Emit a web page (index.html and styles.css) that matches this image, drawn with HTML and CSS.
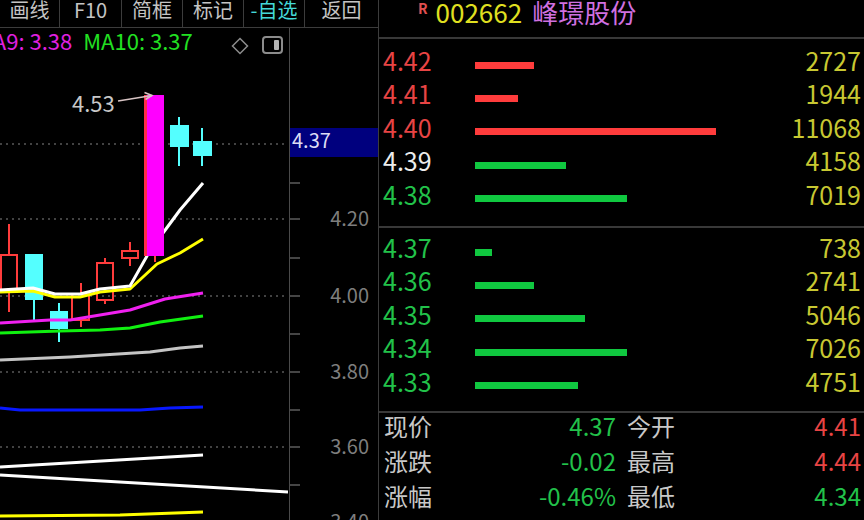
FILE: index.html
```html
<!DOCTYPE html>
<html lang="zh-CN">
<head>
<meta charset="utf-8">
<title>002662 峰璟股份</title>
<link rel="stylesheet" href="styles.css">
</head>
<body>
<div class="app">
  <section class="left">
    <nav class="toolbar">
      <span class="tb w60">画线</span>
      <span class="tb w62">F10</span>
      <span class="tb w61">简框</span>
      <span class="tb w61">标记</span>
      <span class="tb w61 cyan">-自选</span>
      <span class="tb w73">返回</span>
    </nav>
    <div class="chartrow">
      <div class="plot">
        <div class="legend">
          <span class="ma9">MA9: 3.38</span>
          <span class="ma10">MA10: 3.37</span>
          <svg class="icon-diamond" width="18" height="18" viewBox="0 0 18 18"><path d="M9 1.5 L16.5 9 L9 16.5 L1.5 9 Z" fill="none" stroke="#8c8c8c" stroke-width="1.5"/></svg>
          <svg class="icon-panel" width="21" height="18" viewBox="0 0 21 18"><rect x="1" y="1" width="19" height="16" rx="3" fill="none" stroke="#8c8c8c" stroke-width="2"/><rect x="12" y="4" width="5" height="10" rx="1" fill="#b4b4b4"/></svg>
        </div>
        <svg class="kline" width="289" height="462" viewBox="0 58 289 462">
          <g stroke="#585858" stroke-width="1.5" stroke-dasharray="2 4">
            <line x1="0" y1="144" x2="288" y2="144"/>
            <line x1="0" y1="219" x2="288" y2="219"/>
            <line x1="0" y1="296" x2="288" y2="296"/>
            <line x1="0" y1="372" x2="288" y2="372"/>
            <line x1="0" y1="447" x2="288" y2="447"/>
          </g>
          <!-- candles -->
          <g stroke="#ff3c3c" stroke-width="2" fill="none">
            <rect x="1" y="255" width="16" height="35"/>
            <line x1="9" y1="224" x2="9" y2="255"/><line x1="9" y1="290" x2="9" y2="312"/>
            <rect x="72" y="294" width="17" height="26"/>
            <line x1="81" y1="283" x2="81" y2="294"/><line x1="81" y1="320" x2="81" y2="327"/>
            <rect x="97" y="263" width="16" height="37"/>
            <line x1="105" y1="258" x2="105" y2="263"/><line x1="105" y1="300" x2="105" y2="304"/>
            <rect x="122" y="251" width="16" height="7"/>
            <line x1="130" y1="242" x2="130" y2="251"/><line x1="130" y1="258" x2="130" y2="266"/>
          </g>
          <g fill="#54ffff" stroke="#54ffff" stroke-width="2">
            <rect x="25" y="254" width="18" height="46" stroke="none"/>
            <line x1="34" y1="300" x2="34" y2="320"/>
            <rect x="50" y="311" width="18" height="18" stroke="none"/>
            <line x1="59" y1="303" x2="59" y2="342"/>
            <rect x="170" y="125" width="19" height="22" stroke="none"/>
            <line x1="179" y1="117" x2="179" y2="166"/>
            <rect x="193" y="141" width="19" height="15" stroke="none"/>
            <line x1="202" y1="128" x2="202" y2="166"/>
          </g>
          <!-- moving averages -->
          <g fill="none" stroke-width="3" stroke-linejoin="round">
            <polyline stroke="#ffff00" points="0,292 33,291 55,297 80,297 100,292 130,289 157,264 180,253 203,239"/>
            <polyline stroke="#ffffff" points="0,290 33,288 55,294 80,294 100,289 130,286 147,256 163,233 180,210 203,183"/>
            <polyline stroke="#f020f0" points="0,323 50,320 70,320 100,315 130,310 165,299 203,293"/>
            <polyline stroke="#10f010" points="0,333 60,331 100,330 130,328 160,322 203,316"/>
            <polyline stroke="#c4c4c4" points="0,360 70,357 150,352 180,348 203,346"/>
            <polyline stroke="#0818ff" points="0,408 20,410 140,410 170,408 203,407"/>
            <polyline stroke="#ffffff" points="0,467 203,455"/>
            <polyline stroke="#ffffff" points="0,475 288,492"/>
            <polyline stroke="#ffff00" points="0,516 120,515 203,512"/>
          </g>
          <!-- big candle -->
          <line x1="155" y1="256" x2="155" y2="262" stroke="#ff3c3c" stroke-width="2"/>
          <rect x="144" y="95" width="20" height="161" fill="#ff00ff"/>
          <rect x="144" y="95" width="3" height="161" fill="#ff2c48"/>
          <!-- annotation -->
          <text class="note" x="72" y="112">4.53</text>
          <g fill="none" stroke="#d8c4c4" stroke-width="1.5">
            <line x1="118" y1="101" x2="152" y2="95.5"/>
            <polyline points="144.5,92.5 152,95.5 145.5,99.5"/>
          </g>
        </svg>
      </div>
      <div class="axis">
        <svg width="88" height="492" viewBox="290 28 88 492">
          <g stroke="#5c5c5c" stroke-width="1.5">
            <line x1="290" y1="183" x2="300" y2="183"/>
            <line x1="290" y1="219" x2="300" y2="219"/>
            <line x1="290" y1="258" x2="300" y2="258"/>
            <line x1="290" y1="296" x2="300" y2="296"/>
            <line x1="290" y1="334" x2="300" y2="334"/>
            <line x1="290" y1="372" x2="300" y2="372"/>
            <line x1="290" y1="410" x2="300" y2="410"/>
            <line x1="290" y1="447" x2="300" y2="447"/>
            <line x1="290" y1="485" x2="300" y2="485"/>
          </g>
          <g class="axlbl">
            <text x="369" y="226">4.20</text>
            <text x="369" y="303">4.00</text>
            <text x="369" y="379">3.80</text>
            <text x="369" y="454">3.60</text>
            <text x="369" y="529">3.40</text>
          </g>
          <rect x="290" y="128" width="88" height="29" fill="#00007e"/>
          <text class="curpx" x="292" y="148">4.37</text>
        </svg>
      </div>
    </div>
  </section>

  <section class="right">
    <header class="quote-head">
      <span class="r">R</span>
      <span class="code">002662</span>
      <span class="name">峰璟股份</span>
    </header>
    <div class="book sell">
      <div class="row"><span class="px red">4.42</span><span class="bar rbar" style="width:59px"></span><span class="vol">2727</span></div>
      <div class="row"><span class="px red">4.41</span><span class="bar rbar" style="width:43px"></span><span class="vol">1944</span></div>
      <div class="row"><span class="px red">4.40</span><span class="bar rbar" style="width:241px"></span><span class="vol">11068</span></div>
      <div class="row"><span class="px white">4.39</span><span class="bar gbar" style="width:91px"></span><span class="vol">4158</span></div>
      <div class="row"><span class="px green">4.38</span><span class="bar gbar" style="width:152px"></span><span class="vol">7019</span></div>
    </div>
    <div class="book buy">
      <div class="row"><span class="px green">4.37</span><span class="bar gbar" style="width:17px"></span><span class="vol">738</span></div>
      <div class="row"><span class="px green">4.36</span><span class="bar gbar" style="width:59px"></span><span class="vol">2741</span></div>
      <div class="row"><span class="px green">4.35</span><span class="bar gbar" style="width:110px"></span><span class="vol">5046</span></div>
      <div class="row"><span class="px green">4.34</span><span class="bar gbar" style="width:152px"></span><span class="vol">7026</span></div>
      <div class="row"><span class="px green">4.33</span><span class="bar gbar" style="width:103px"></span><span class="vol">4751</span></div>
    </div>
    <div class="stats">
      <span class="lbl">现价</span><span class="val green">4.37</span><span class="lbl lbl2">今开</span><span class="val red">4.41</span>
      <span class="lbl">涨跌</span><span class="val green">-0.02</span><span class="lbl lbl2">最高</span><span class="val red">4.44</span>
      <span class="lbl">涨幅</span><span class="val green">-0.46%</span><span class="lbl lbl2">最低</span><span class="val green">4.34</span>
      <span class="lbl">总量</span><span class="val yellow">787463</span><span class="lbl lbl2">量比</span><span class="val green">0.97</span>
    </div>
  </section>
</div>
</body>
</html>
```

FILE: styles.css
```css
* { box-sizing: border-box; }
html, body { margin: 0; padding: 0; background: #000; }
body {
  width: 864px;
  height: 520px;
  overflow: hidden;
  font-family: "Noto Sans CJK SC", "Noto Sans", sans-serif;
  color: #c8c8c8;
}
.app { display: flex; width: 864px; height: 520px; }

/* ---------- left: chart ---------- */
.left { width: 378px; display: flex; flex-direction: column; }
.toolbar { display: flex; height: 28px; border-bottom: 1px solid #3c3c3c; }
.tb {
  height: 27px;
  border-right: 1px solid #3c3c3c;
  font-size: 20px;
  line-height: 20px;
  text-align: center;
  color: #c4c4c4;
  white-space: nowrap;
}
.tb:last-child { border-right: none; }
.w60 { width: 60px; }
.w61 { width: 61px; }
.w62 { width: 62px; }
.w73 { width: 73px; }
.cyan { color: #44d8d8; }

.chartrow { display: flex; flex: 1; }
.plot { width: 289px; overflow: hidden; display: flex; flex-direction: column; }
.legend {
  height: 30px;
  display: flex;
  align-items: flex-start;
  font-size: 22px;
  line-height: 24px;
  white-space: nowrap;
  padding-right: 6px;
}
.ma9 { color: #e020e0; margin-left: -25px; }
.ma10 { color: #22e022; margin-left: 11px; }
.icon-diamond { margin-left: auto; margin-top: 9px; flex: none; }
.icon-panel { margin-left: 13px; margin-top: 8px; flex: none; }
.kline { display: block; }
.kline text, .axis text { font-family: "Noto Sans CJK SC", "Noto Sans", sans-serif; }
.note { font-size: 22px; fill: #c8c8c8; }

.axis { width: 89px; border-left: 1px solid #4a4a4a; }
.axis svg { display: block; }
.axlbl text { font-size: 20px; fill: #7e7e7e; text-anchor: end; }
.curpx { font-size: 20px; fill: #dcdcf4; }

/* ---------- right: quote ---------- */
.right {
  width: 486px;
  border-left: 1px solid #3c3c3c;
  display: flex;
  flex-direction: column;
}
.quote-head {
  height: 39px;
  flex: none;
  border-bottom: 2px solid #383838;
  display: flex;
  align-items: flex-start;
  padding-left: 39px;
  font-size: 26px;
  line-height: 24px;
  white-space: nowrap;
}
.r { font-size: 14px; font-weight: 700; color: #e05050; line-height: 14px; margin-top: 1px; }
.code { color: #e0e020; margin-left: 8px; }
.name { color: #d070e0; margin-left: 10px; }

.book { border-bottom: 2px solid #383838; font-size: 25px; flex: none; }
.sell { height: 189px; padding-top: 5px; }
.buy { height: 185px; padding-top: 3px; }
.row {
  display: flex;
  height: 33.4px;
  line-height: 33.4px;
  padding: 0 3px 0 4px;
  white-space: nowrap;
}
.px { width: 92px; flex: none; }
.bar { height: 7px; align-self: center; margin-top: 9px; flex: none; }
.rbar { background: #ff3c3c; }
.gbar { background: #10c840; }
.vol { margin-left: auto; color: #c8c832; }

.red { color: #e84444; }
.green { color: #22c24a; }
.white { color: #ececec; }
.yellow { color: #c8c832; }

.stats {
  display: grid;
  grid-template-columns: 60px 172px 71px 1fr;
  margin-top: -5px;
  padding: 0 3px 0 5px;
  font-size: 24px;
  line-height: 35px;
  white-space: nowrap;
}
.lbl { color: #c8c8c8; }
.lbl2 { padding-left: 11px; }
.val { text-align: right; }
```
